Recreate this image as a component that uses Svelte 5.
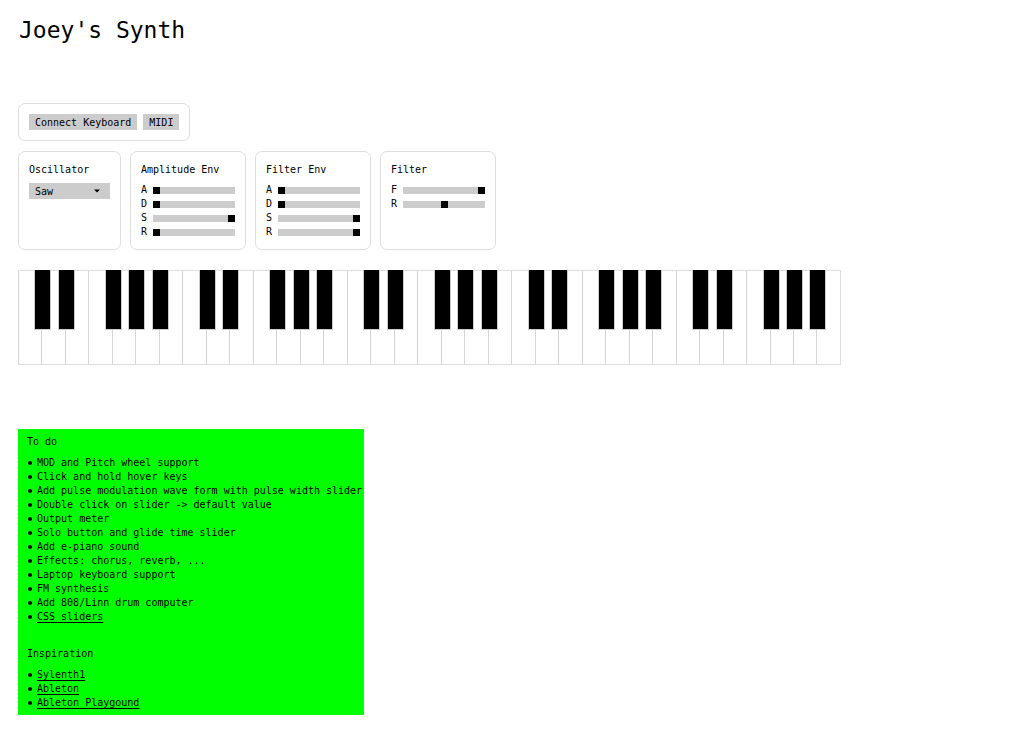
<script lang="ts">
  type Slider = { label: string; value: number };
  type Item = { text: string; href?: string };

  let wave = $state('Saw');

  const waves = ['Sine', 'Triangle', 'Square', 'Saw'];

  const panels: { title: string; sliders: Slider[] }[] = $state([
    {
      title: 'Amplitude Env',
      sliders: [
        { label: 'A', value: 0 },
        { label: 'D', value: 0 },
        { label: 'S', value: 100 },
        { label: 'R', value: 0 },
      ],
    },
    {
      title: 'Filter Env',
      sliders: [
        { label: 'A', value: 0 },
        { label: 'D', value: 0 },
        { label: 'S', value: 100 },
        { label: 'R', value: 100 },
      ],
    },
    {
      title: 'Filter',
      sliders: [
        { label: 'F', value: 100 },
        { label: 'R', value: 50 },
      ],
    },
  ]);

  // five octaves of white keys, E and B have no sharp
  const octave = ['C', 'D', 'E', 'F', 'G', 'A', 'B'];
  const keys = [1, 2, 3, 4, 5].flatMap((n) =>
    octave.map((name) => ({ id: name + n, sharp: name !== 'E' && name !== 'B' ? `${name}#${n}` : null }))
  );

  const todo: Item[] = [
    { text: 'MOD and Pitch wheel support' },
    { text: 'Click and hold hover keys' },
    { text: 'Add pulse modulation wave form with pulse width slider' },
    { text: 'Double click on slider -> default value' },
    { text: 'Output meter' },
    { text: 'Solo button and glide time slider' },
    { text: 'Add e-piano sound' },
    { text: 'Effects: chorus, reverb, ...' },
    { text: 'Laptop keyboard support' },
    { text: 'FM synthesis' },
    { text: 'Add 808/Linn drum computer' },
    { text: 'CSS sliders', href: '#sliders' },
  ];

  const inspiration: Item[] = [
    { text: 'Sylenth1', href: '#sylenth1' },
    { text: 'Ableton', href: '#ableton' },
    { text: 'Ableton Playgound', href: '#playground' },
  ];
</script>

{#snippet list(items: Item[])}
  <ul>
    {#each items as item}
      <li>
        {#if item.href}<a href={item.href}>{item.text}</a>{:else}{item.text}{/if}
      </li>
    {/each}
  </ul>
{/snippet}

<main>
  <h1>Joey's Synth</h1>

  <div class="card connect">
    <button type="button">Connect Keyboard</button>
    <button type="button">MIDI</button>
  </div>

  <div class="panels">
    <section class="card oscillator">
      <h2><label for="wave">Oscillator</label></h2>
      <div class="select">
        <select id="wave" bind:value={wave}>
          {#each waves as w}
            <option>{w}</option>
          {/each}
        </select>
        <svg width="6" height="4" viewBox="0 0 6 4" aria-hidden="true"><path d="M0 0.5h6L3 3.5z" /></svg>
      </div>
    </section>

    {#each panels as panel}
      <section class="card panel">
        <h2>{panel.title}</h2>
        {#each panel.sliders as slider}
          <label class="slider">
            <span>{slider.label}</span>
            <input type="range" min="0" max="100" bind:value={slider.value} />
          </label>
        {/each}
      </section>
    {/each}
  </div>

  <div class="keyboard">
    {#each keys as key (key.id)}
      <div class="key">
        <button type="button" class="white" aria-label={key.id}></button>
        {#if key.sharp}
          <button type="button" class="black" aria-label={key.sharp}></button>
        {/if}
      </div>
    {/each}
  </div>

  <aside class="notes">
    <h2>To do</h2>
    {@render list(todo)}
    <h2>Inspiration</h2>
    {@render list(inspiration)}
  </aside>
</main>

<style>
  :global(body) {
    background: #fff;
  }

  main {
    padding: 14px 18px;
    font-family: 'DejaVu Sans Mono', monospace;
    font-size: 10px;
    line-height: 16px;
    color: #000;
  }

  h1 {
    margin: 0 0 57px;
    padding-left: 1px;
    font-size: 23px;
    font-weight: 400;
    line-height: 32px;
  }

  h2 {
    margin: 0 0 5px;
    font-size: 10px;
    font-weight: 400;
    line-height: 16px;
  }

  button,
  select {
    box-sizing: border-box;
    height: 16px;
    padding: 1px 6px 0;
    border: 0;
    border-radius: 0;
    background: #ccc;
    color: #000;
    font: inherit;
  }

  .card {
    box-sizing: border-box;
    padding: 10px;
    border: 1px solid #ddd;
    border-radius: 7px;
  }

  .connect {
    display: flex;
    gap: 6px;
    width: fit-content;
    margin-bottom: 10px;
  }

  .panels {
    display: flex;
    flex-wrap: wrap;
    gap: 9px;
    margin-bottom: 20px;
  }

  .oscillator { width: 103px; }
  .panel { width: 116px; }

  .select {
    position: relative;
  }

  .select select {
    display: block;
    width: 100%;
    appearance: none;
  }

  .select svg {
    position: absolute;
    top: 6px;
    right: 10px;
    pointer-events: none;
  }

  .slider {
    display: flex;
    align-items: center;
    height: 14px;
  }

  .slider span {
    width: 12px;
    flex: none;
  }

  .slider input {
    flex: 1;
    min-width: 0;
    height: 7px;
    margin: 0;
    appearance: none;
    background: #ccc;
  }

  .slider input::-webkit-slider-thumb {
    appearance: none;
    width: 7px;
    height: 7px;
    background: #000;
  }

  .keyboard {
    display: flex;
    box-sizing: border-box;
    max-width: 823px;
    height: 95px;
    margin-bottom: 64px;
    border: 1px solid #ddd;
    border-left: 0;
  }

  .key {
    position: relative;
    flex: 1;
  }

  .white {
    display: block;
    width: 100%;
    height: 100%;
    padding: 0;
    border-left: 1px solid #d4d4d4;
    background: #fff;
  }

  /* sits over the seam between two white keys */
  .black {
    position: absolute;
    z-index: 1;
    top: -1px;
    right: -10px;
    width: 17px;
    height: 60px;
    padding: 0;
    border: 1px solid #ccc;
    border-top: 0;
    background: #000;
  }

  .notes {
    width: fit-content;
    padding: 5px 2px 5px 9px;
    background: #0f0;
  }

  .notes h2 {
    margin-bottom: 6px;
  }

  ul {
    margin: 0;
    padding: 0;
    list-style: none;
    line-height: 14px;
  }

  ul + h2 {
    margin-top: 22px;
  }

  li {
    display: flex;
    align-items: center;
    gap: 5px;
    padding-left: 1px;
  }

  li::before {
    content: '';
    width: 4px;
    height: 4px;
    border-radius: 50%;
    background: #000;
  }

  a {
    color: inherit;
    text-underline-offset: 2px;
  }
</style>
